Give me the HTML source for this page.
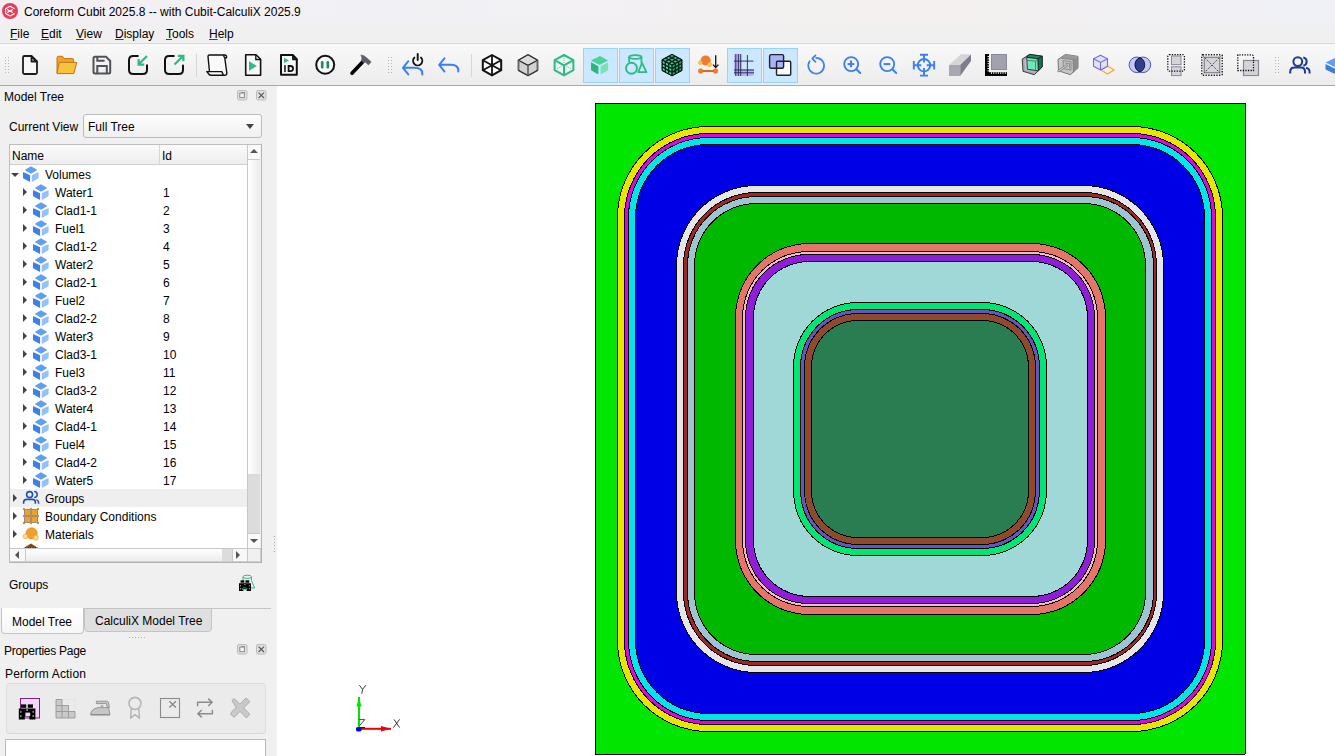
<!DOCTYPE html>
<html><head><meta charset="utf-8"><style>
*{margin:0;padding:0;box-sizing:border-box}
html,body{width:1335px;height:756px;overflow:hidden;background:#fff;font-family:"Liberation Sans", sans-serif;font-size:12px;color:#000}
.a{position:absolute}
.t{position:absolute;white-space:nowrap;line-height:14px;margin-top:1px}
.tri-r{position:absolute;width:0;height:0;border-left:4px solid #444;border-top:4px solid transparent;border-bottom:4px solid transparent}
.tri-d{position:absolute;width:0;height:0;border-top:4px solid #444;border-left:4px solid transparent;border-right:4px solid transparent}
u{text-decoration:underline;text-decoration-color:#444}
</style></head><body>
<div class="a" style="left:0;top:0;width:1335px;height:23px;background:linear-gradient(90deg,#f4eff3 0%,#f1f1f5 30%,#f4f0ef 70%,#eff1f7 100%)"></div>
<div class="t" style="left:24px;top:4px">Coreform Cubit 2025.8 -- with Cubit-CalculiX 2025.9</div>
<div class="a" style="left:0;top:23px;width:1335px;height:21px;background:#f0f0f0;border-bottom:1px solid #d8d8d8"></div>
<div class="t" style="left:10px;top:26px"><u>F</u>ile</div>
<div class="t" style="left:41px;top:26px"><u>E</u>dit</div>
<div class="t" style="left:76px;top:26px"><u>V</u>iew</div>
<div class="t" style="left:115px;top:26px"><u>D</u>isplay</div>
<div class="t" style="left:166px;top:26px"><u>T</u>ools</div>
<div class="t" style="left:209px;top:26px"><u>H</u>elp</div>
<div class="a" style="left:0;top:44px;width:1335px;height:42px;background:linear-gradient(#f9f9f9,#ececec);border-bottom:1px solid #a9a9a9"></div>
<svg class="a" style="left:0;top:0" width="1335" height="86">
<circle cx="10" cy="11" r="8" fill="#ea3c5a"/>
<path d="M14.6 8.7 L10 6.2 L5.6 8.7 V13.4 L10 15.9 L14.6 13.4 M7.2 9.4 L12.8 12.6 M7.2 12.6 L12.8 9.4" stroke="#fff" stroke-width="1.1" fill="none" stroke-linejoin="round"/>
<rect x="5" y="57" width="1" height="1" fill="#b4b4b4"/><rect x="8" y="57" width="1" height="1" fill="#b4b4b4"/><rect x="5" y="60" width="1" height="1" fill="#b4b4b4"/><rect x="8" y="60" width="1" height="1" fill="#b4b4b4"/><rect x="5" y="63" width="1" height="1" fill="#b4b4b4"/><rect x="8" y="63" width="1" height="1" fill="#b4b4b4"/><rect x="5" y="66" width="1" height="1" fill="#b4b4b4"/><rect x="8" y="66" width="1" height="1" fill="#b4b4b4"/><rect x="5" y="69" width="1" height="1" fill="#b4b4b4"/><rect x="8" y="69" width="1" height="1" fill="#b4b4b4"/><rect x="5" y="72" width="1" height="1" fill="#b4b4b4"/><rect x="8" y="72" width="1" height="1" fill="#b4b4b4"/><path d="M24.5 56 H31.5 L37 61.5 V72.5 Q37 74 35.5 74 H24.5 Q23 74 23 72.5 V57.5 Q23 56 24.5 56Z" fill="#f8f8f8" stroke="#1c1c1c" stroke-width="1.8" stroke-linejoin="round"/><path d="M31.5 56.5 V61.5 H36.5Z" fill="#fff" stroke="#1c1c1c" stroke-width="1.8" stroke-linejoin="round"/><path d="M57 73 V57.8 Q57 56.3 58.5 56.3 H62.5 L64.3 58.6 H72.2 Q73.7 58.6 73.7 60.1 V73Z" fill="#f0a22a" stroke="#c2761a" stroke-width="1"/><path d="M59.2 62.4 H76.8 L73.8 73.6 H57Z" fill="#f8c33a" stroke="#c2761a" stroke-width="1" stroke-linejoin="round"/><path d="M95 56.8 H106 L110.2 61 V72 Q110.2 73.5 108.7 73.5 H95 Q93.5 73.5 93.5 72 V58.3 Q93.5 56.8 95 56.8Z" fill="none" stroke="#50535b" stroke-width="2"/><path d="M97.3 57 V60.8 H104.6" fill="none" stroke="#50535b" stroke-width="2"/><path d="M97.3 73.5 V66 H106.8 V73.5" fill="none" stroke="#50535b" stroke-width="2"/><path d="M137.8 56 H133.2 Q129 56 129 60.2 V69.8 Q129 74 133.2 74 H142.8 Q147 74 147 69.8 V65.2" fill="none" stroke="#111" stroke-width="2" stroke-linecap="round"/><path d="M147 56 L139 64 M138.6 59 V64.6 H144.2" fill="none" stroke="#2dbb84" stroke-width="2.2"/><path d="M173.8 56 H169.2 Q165 56 165 60.2 V69.8 Q165 74 169.2 74 H178.8 Q183 74 183 69.8 V65.5" fill="none" stroke="#111" stroke-width="2" stroke-linecap="round"/><path d="M174.5 64.5 L182.8 56.2 M177.8 55.8 H183.4 V61.2" fill="none" stroke="#2dbb84" stroke-width="2.2"/><rect x="196" y="54" width="1" height="23" fill="#d6d6d6"/><path d="M209.5 71.8 L208 56.5 Q208 55 209.5 55 H224.5 Q227 55 226.5 57.8 H224.8 L226.8 73 Q227 75.3 224.6 75.3 H211.5 Q209.5 75.3 208.6 73.8 L206.8 71.6 H221.8 L223.2 74.6" fill="#fafafa" stroke="#111" stroke-width="1.4" stroke-linejoin="round"/><path d="M224.3 55.1 Q223 56 224.8 57.8" fill="none" stroke="#111" stroke-width="1.3"/><path d="M245.7 54.7 H256 L260.6 59.3 V75.3 H245.7Z" fill="#f8f8f8" stroke="#111" stroke-width="1.6" stroke-linejoin="round"/><path d="M255.8 55 V59.5 H260.3" fill="none" stroke="#111" stroke-width="1.3"/><path d="M249 61.2 L256.8 66 L249 70.8Z" fill="#2dbb84"/><path d="M281 55 H292.7 L296.8 59.1 V74.8 H281Z" fill="#f8f8f8" stroke="#111" stroke-width="2" stroke-linejoin="round"/><path d="M292.7 55 V59.6 H296.8Z" fill="#333" stroke="#111" stroke-width="1.2" stroke-linejoin="round"/><path d="M284 57.7 L289 60.4 L284 63.1Z" fill="#2dbb84"/><rect x="284.1" y="65.1" width="1.7" height="7" fill="#2a2a2a"/><path d="M288.6 66 H290.4 Q293.1 66 293.1 68.55 Q293.1 71.1 290.4 71.1 H288.6Z" fill="none" stroke="#111" stroke-width="1.8"/><circle cx="325.2" cy="64.8" r="9" fill="#fafafa" stroke="#111" stroke-width="2"/><rect x="320.9" y="61" width="2.6" height="7.5" rx="1.2" fill="#1e8a5c"/><rect x="326.5" y="61" width="2.6" height="7.5" rx="1.2" fill="#1e8a5c"/><path d="M352 73.2 L362.6 62" stroke="#000" stroke-width="3.6" stroke-linecap="round"/><path d="M360.9 55 L364 55.8 L367.2 58.3 L371.2 61.9 L368.4 64.9 L365.6 62.3 L363.7 62.7 L361.4 60.6 L362 57.9Z" fill="#5c5f6a" stroke="#5c5f6a" stroke-width="0.6" stroke-linejoin="round"/><rect x="388" y="57" width="1" height="1" fill="#b4b4b4"/><rect x="391" y="57" width="1" height="1" fill="#b4b4b4"/><rect x="388" y="60" width="1" height="1" fill="#b4b4b4"/><rect x="391" y="60" width="1" height="1" fill="#b4b4b4"/><rect x="388" y="63" width="1" height="1" fill="#b4b4b4"/><rect x="391" y="63" width="1" height="1" fill="#b4b4b4"/><rect x="388" y="66" width="1" height="1" fill="#b4b4b4"/><rect x="391" y="66" width="1" height="1" fill="#b4b4b4"/><rect x="388" y="69" width="1" height="1" fill="#b4b4b4"/><rect x="391" y="69" width="1" height="1" fill="#b4b4b4"/><rect x="388" y="72" width="1" height="1" fill="#b4b4b4"/><rect x="391" y="72" width="1" height="1" fill="#b4b4b4"/><path d="M408.3 61.2 L403 67.8 L408.3 74.4 M403.2 67.8 H414.5 Q422.3 67.8 422.3 73.6 V74.6" fill="none" stroke="#3b7ff0" stroke-width="2" stroke-linecap="round" stroke-linejoin="round"/><path d="M414.4 57.6 A4.6 4.6 0 1 0 421 57.6 M417.7 54 V60" fill="none" stroke="#111" stroke-width="1.9" stroke-linecap="round"/><path d="M444.4 58.4 L439.2 64.8 L444.4 71.4 M439.4 64.8 H451 Q458.3 64.8 458.3 70.5 V71.6" fill="none" stroke="#3b7ff0" stroke-width="2" stroke-linecap="round" stroke-linejoin="round"/><rect x="471" y="54" width="1" height="23" fill="#d6d6d6"/><polygon points="492,55 501.2,60.2 501.2,70.2 492,75.4 482.8,70.2 482.8,60.2" fill="#fafafa" stroke="#111" stroke-width="2" stroke-linejoin="round"/><path d="M492 55 V75.4 M482.8 60.2 L501.2 70.2 M501.2 60.2 L482.8 70.2" stroke="#111" stroke-width="1.8"/><polygon points="528,54.8 537.6,60.2 537.6,70.4 528,75.6 518.4,70.4 518.4,60.2" fill="#d2d2d6" stroke="#2a2a2a" stroke-width="1.2" stroke-linejoin="round"/><polygon points="528,54.8 537.6,60.2 528,65.4 518.4,60.2" fill="#dcdce0" stroke="#2a2a2a" stroke-width="1.2" stroke-linejoin="round"/><path d="M528 65.4 V75.2 M518.6 60.6 V70 M537.4 60.6 V70" stroke="#6a6a6a" stroke-width="1.8"/><polygon points="564,55 573.4,60.2 573.4,70.2 564,75.4 554.6,70.2 554.6,60.2" fill="none" stroke="#2dbb84" stroke-width="2" stroke-linejoin="round"/><path d="M554.6 60.2 L564 65.4 L573.4 60.2 M564 65.4 V75.4" fill="none" stroke="#2dbb84" stroke-width="2"/><path d="M564 56 V64 M557 68.5 L562 66 M571 68.5 L566 66" stroke="#2dbb84" stroke-width="0.8" stroke-dasharray="1 1"/><rect x="583.5" y="48.5" width="34" height="34" fill="#cce8ff" stroke="#99d1ff" stroke-width="1"/><rect x="619.5" y="48.5" width="34" height="34" fill="#cce8ff" stroke="#99d1ff" stroke-width="1"/><rect x="655.5" y="48.5" width="34" height="34" fill="#cce8ff" stroke="#99d1ff" stroke-width="1"/><rect x="727.5" y="48.5" width="34" height="34" fill="#cce8ff" stroke="#99d1ff" stroke-width="1"/><rect x="763.5" y="48.5" width="34" height="34" fill="#cce8ff" stroke="#99d1ff" stroke-width="1"/><path d="M599.5 56.2 Q600 56 600.5 56.3 L607.3 60 Q608 60.5 607.3 61 L600.5 64.6 Q599.5 65.1 598.5 64.6 L591.7 61 Q591 60.5 591.7 60 Z" fill="#4ad49c"/><path d="M591 62.2 L598.4 66.2 V73.6 Q598.4 74.3 597.6 73.9 L591.8 70.8 Q591 70.3 591 69.5Z" fill="#2cb57c"/><path d="M608.2 62.2 L600.6 66.2 V73.6 Q600.6 74.3 601.4 73.9 L607.4 70.8 Q608.2 70.3 608.2 69.5Z" fill="#78e3b6"/><ellipse cx="635.3" cy="57" rx="6.2" ry="1.9" fill="none" stroke="#2dbb84" stroke-width="1.8"/><path d="M629.1 57 V62.5 M641.5 57 V63.5" stroke="#2dbb84" stroke-width="1.8"/><path d="M642 63 L646.5 72.2 H638.3Z" fill="none" stroke="#2dbb84" stroke-width="1.8" stroke-linejoin="round"/><circle cx="631.5" cy="68.2" r="5.5" fill="#cce8ff" stroke="#2dbb84" stroke-width="1.9"/><polygon points="672,54.3 682,59.699999999999996 682,70.5 672,75.9 662,70.5 662,59.699999999999996" fill="#0b2419" stroke="#000" stroke-width="1" stroke-linejoin="round"/><polygon points="663.4666666666667,59.699999999999996 665.3333333333334,58.69199999999999 667.2,59.699999999999996 665.3333333333334,60.708" fill="#3fcf94"/><polygon points="666.8000000000001,61.49999999999999 668.6666666666667,60.49199999999999 670.5333333333334,61.49999999999999 668.6666666666667,62.507999999999996" fill="#3fcf94"/><polygon points="670.1333333333333,63.3 672.0,62.291999999999994 673.8666666666667,63.3 672.0,64.30799999999999" fill="#3fcf94"/><polygon points="666.8000000000001,57.9 668.6666666666667,56.891999999999996 670.5333333333334,57.9 668.6666666666667,58.908" fill="#3fcf94"/><polygon points="670.1333333333334,59.699999999999996 672.0000000000001,58.69199999999999 673.8666666666668,59.699999999999996 672.0000000000001,60.708" fill="#3fcf94"/><polygon points="673.4666666666667,61.5 675.3333333333334,60.492 677.2,61.5 675.3333333333334,62.508" fill="#3fcf94"/><polygon points="670.1333333333333,56.099999999999994 672.0,55.09199999999999 673.8666666666667,56.099999999999994 672.0,57.108" fill="#3fcf94"/><polygon points="673.4666666666667,57.89999999999999 675.3333333333334,56.89199999999999 677.2,57.89999999999999 675.3333333333334,58.907999999999994" fill="#3fcf94"/><polygon points="676.8,59.699999999999996 678.6666666666666,58.69199999999999 680.5333333333333,59.699999999999996 678.6666666666666,60.708" fill="#3fcf94"/><polygon points="662.7333333333333,60.888 664.6,61.896 664.6,63.912 662.7333333333333,62.903999999999996" fill="#52dca4"/><polygon points="662.7333333333333,64.488 664.6,65.496 664.6,67.512 662.7333333333333,66.504" fill="#52dca4"/><polygon points="662.7333333333333,68.088 664.6,69.09599999999999 664.6,71.112 662.7333333333333,70.104" fill="#52dca4"/><polygon points="666.0666666666667,62.687999999999995 667.9333333333334,63.696 667.9333333333334,65.712 666.0666666666667,64.704" fill="#52dca4"/><polygon points="666.0666666666667,66.288 667.9333333333334,67.29599999999999 667.9333333333334,69.312 666.0666666666667,68.304" fill="#52dca4"/><polygon points="666.0666666666667,69.88799999999999 667.9333333333334,70.89599999999999 667.9333333333334,72.91199999999999 666.0666666666667,71.904" fill="#52dca4"/><polygon points="669.4,64.488 671.2666666666667,65.496 671.2666666666667,67.512 669.4,66.504" fill="#52dca4"/><polygon points="669.4,68.088 671.2666666666667,69.09599999999999 671.2666666666667,71.112 669.4,70.104" fill="#52dca4"/><polygon points="669.4,71.688 671.2666666666667,72.696 671.2666666666667,74.712 669.4,73.70400000000001" fill="#52dca4"/><polygon points="672.7333333333333,65.496 674.6,64.488 674.6,66.504 672.7333333333333,67.512" fill="#2fae78"/><polygon points="672.7333333333333,69.09599999999999 674.6,68.088 674.6,70.104 672.7333333333333,71.112" fill="#2fae78"/><polygon points="672.7333333333333,72.696 674.6,71.688 674.6,73.70400000000001 672.7333333333333,74.712" fill="#2fae78"/><polygon points="676.0666666666667,63.696 677.9333333333334,62.687999999999995 677.9333333333334,64.704 676.0666666666667,65.712" fill="#2fae78"/><polygon points="676.0666666666667,67.29599999999999 677.9333333333334,66.288 677.9333333333334,68.304 676.0666666666667,69.312" fill="#2fae78"/><polygon points="676.0666666666667,70.896 677.9333333333334,69.888 677.9333333333334,71.90400000000001 676.0666666666667,72.912" fill="#2fae78"/><polygon points="679.4,61.895999999999994 681.2666666666667,60.88799999999999 681.2666666666667,62.90399999999999 679.4,63.91199999999999" fill="#2fae78"/><polygon points="679.4,65.496 681.2666666666667,64.488 681.2666666666667,66.504 679.4,67.512" fill="#2fae78"/><polygon points="679.4,69.09599999999999 681.2666666666667,68.088 681.2666666666667,70.104 679.4,71.112" fill="#2fae78"/><circle cx="705.6" cy="60.5" r="5.1" fill="#f27c2c"/><circle cx="700.4" cy="62.6" r="1.9" fill="#f9c63f" stroke="#e9a53a" stroke-width="0.6"/><circle cx="709.6" cy="64.6" r="2.1" fill="#f9c63f" stroke="#e9a53a" stroke-width="0.6"/><path d="M700.6 71 H715.6" stroke="#d86a22" stroke-width="2"/><circle cx="700.6" cy="71" r="2.3" fill="#f27c2c" stroke="#d86a22" stroke-width="0.6"/><circle cx="715.6" cy="71" r="2.3" fill="#f27c2c" stroke="#d86a22" stroke-width="0.6"/><path d="M715.7 55.2 V67.4 M713 64.6 L715.7 67.6 L718.4 64.6" fill="none" stroke="#111" stroke-width="1.3"/><path d="M736 54 H739.5 Q741.5 54 741.5 56 V69 H752 Q754 69 754 71 V74 Q754 76 752 76 H736 Q734 76 734 74 V56 Q734 54 736 54Z" fill="#b3b3f3"/><path d="M735.8 54 V76 M738.4 54 V76 M740.7 54 V76 M747.4 55 V76 M734 61.1 H753.4 M734 70 H754 M734 72.8 H754" stroke="#23234f" stroke-width="0.9"/><rect x="776.5" y="61.3" width="14.2" height="14" rx="1" fill="#fbfbff"/><rect x="769.6" y="54.6" width="14" height="13.6" rx="1.5" fill="#a9b4f8" stroke="#222" stroke-width="1.4"/><rect x="776.5" y="61.3" width="14.2" height="14" rx="1" fill="none" stroke="#222" stroke-width="1.4"/><path d="M816.2 57.8 A7.9 7.9 0 1 1 809.7 61.2" fill="none" stroke="#3b7ff0" stroke-width="1.7" stroke-linecap="round"/><path d="M815.5 55.4 L812.2 58.7 L815.5 61.9" fill="none" stroke="#3b7ff0" stroke-width="1.7" stroke-linecap="round" stroke-linejoin="round"/><circle cx="851.2" cy="64.1" r="7" fill="none" stroke="#3b7ff0" stroke-width="1.85"/><path d="M856.4000000000001 69.3 L860.2 73" stroke="#3b7ff0" stroke-width="2" stroke-linecap="round"/><path d="M847.6 64.1 H854.3000000000001" stroke="#3b7ff0" stroke-width="2"/><path d="M851.0 60.6 V67.3" stroke="#3b7ff0" stroke-width="2"/><circle cx="887.2" cy="64.1" r="7" fill="none" stroke="#3b7ff0" stroke-width="1.85"/><path d="M892.4000000000001 69.3 L896.2 73" stroke="#3b7ff0" stroke-width="2" stroke-linecap="round"/><path d="M883.6 64.1 H890.3000000000001" stroke="#3b7ff0" stroke-width="2"/><circle cx="924" cy="65.2" r="6.2" fill="none" stroke="#3b7ff0" stroke-width="1.9"/><path d="M924 55 V62.5 M924 68 V75.5 M913.8 65.2 H921.3 M926.7 65.2 H934.2 M920 54.8 H928 M920 75.6 H928 M913.8 61 V69.4 M934.2 61 V69.4" stroke="#3b7ff0" stroke-width="1.9"/><polygon points="949,65 960.2,65 971,54.5 961,54.3" fill="#d4d4da"/><polygon points="960.2,65 971,54.5 971,61 960.2,76" fill="#7d7d8b"/><rect x="949" y="65" width="11.2" height="11" fill="#a7a7b1"/><rect x="991.5" y="54.5" width="15" height="15" fill="#a2a2ae" stroke="#8a8a98" stroke-width="1"/><path d="M985 54 H989 V72.3 H1007 V76 H985Z" fill="#000"/><rect x="987.5" y="56.0" width="1.5" height="1" fill="#fff"/><rect x="991.0" y="72.3" width="1" height="1.5" fill="#fff"/><rect x="987.5" y="58.4" width="1.5" height="1" fill="#fff"/><rect x="993.3" y="72.3" width="1" height="1.5" fill="#fff"/><rect x="987.5" y="60.8" width="1.5" height="1" fill="#fff"/><rect x="995.6" y="72.3" width="1" height="1.5" fill="#fff"/><rect x="987.5" y="63.2" width="1.5" height="1" fill="#fff"/><rect x="997.9" y="72.3" width="1" height="1.5" fill="#fff"/><rect x="987.5" y="65.6" width="1.5" height="1" fill="#fff"/><rect x="1000.2" y="72.3" width="1" height="1.5" fill="#fff"/><rect x="987.5" y="68.0" width="1.5" height="1" fill="#fff"/><rect x="1002.5" y="72.3" width="1" height="1.5" fill="#fff"/><rect x="987.5" y="70.4" width="1.5" height="1" fill="#fff"/><rect x="1004.8" y="72.3" width="1" height="1.5" fill="#fff"/><polygon points="1022.2,59.1 1029.4,54.4 1042.2,56.2 1042.2,67 1034.3,74.7 1023,71.3" fill="#a9a9b6" stroke="#2a2a2a" stroke-width="0.9" stroke-linejoin="round"/><polygon points="1024.6,60.5 1026.9,58.5 1027.4,69.3 1034.5,72.6 1025.4,69.8" fill="#c4c4ce"/><polygon points="1029.4,54.4 1042.2,56.2 1037.8,58.7 1026.7,57.4" fill="#1e8a60" stroke="#1a1a1a" stroke-width="0.8" stroke-linejoin="round"/><polygon points="1042.2,56.2 1042.2,67 1038.3,70.8 1037.8,58.7" fill="#157452" stroke="#1a1a1a" stroke-width="0.8" stroke-linejoin="round"/><polygon points="1026.7,57.4 1037.8,58.7 1038.3,70.8 1027.4,69.3" fill="#72e8ba" stroke="#1a1a1a" stroke-width="0.8" stroke-linejoin="round"/><path d="M1027 60.2 L1035.6 61.2 L1037.8 58.8 M1035.6 61.2 V70.4" fill="none" stroke="#2a5a48" stroke-width="0.7"/><polygon points="1058,59.4 1065.5,54.4 1078,56.4 1078,67.8 1070.4,74.7 1058.5,70.8" fill="#c6c6c6" stroke="#6a6a6a" stroke-width="0.9" stroke-linejoin="round"/><polygon points="1065.5,54.4 1078,56.4 1073,59.6 1061,58.2" fill="#9a9a9a"/><polygon points="1078,56.4 1078,67.8 1073.4,72.4 1073,59.6" fill="#8e8e8e"/><path d="M1061 58.2 L1073 59.6 L1073.4 72.4 M1063 60.6 L1071 61.6 V70 L1063.4 68.6Z M1065 63 L1069.4 63.6 V68.2" fill="none" stroke="#7a7a7a" stroke-width="0.8"/><path d="M1058.6 71 L1066.6 65.6" stroke="#8a8a8a" stroke-width="2.6" stroke-linecap="round"/><path d="M1058.6 71 L1066.6 65.6" stroke="#d6d6d6" stroke-width="1" stroke-linecap="round"/><path d="M1101 70 L1107.5 66 L1114 70 L1107.5 74Z" fill="none" stroke="#f4a43a" stroke-width="1.2"/><polygon points="1100.5,55.2 1107.5,58.8 1107.5,66.2 1100.5,70 1093.5,66.2 1093.5,58.8" fill="#e2e2e8" stroke="#6b6bf6" stroke-width="1.05" stroke-linejoin="round"/><path d="M1093.5 58.8 L1100.5 62.5 L1107.5 58.8 M1100.5 62.5 V70" fill="none" stroke="#6b6bf6" stroke-width="1.05"/><circle cx="1136.9" cy="64.8" r="7.8" fill="#c3c8f6" stroke="#3a4aa4" stroke-width="0.9"/><circle cx="1142.9" cy="64.8" r="7.8" fill="#c3c8f6" stroke="#3a4aa4" stroke-width="0.9"/><path d="M1139.9 57.6 A7.8 7.8 0 0 1 1139.9 72 A7.8 7.8 0 0 1 1139.9 57.6Z" fill="#2f3f8e" stroke="#111" stroke-width="0.9"/><rect x="1171.5" y="56" width="9.5" height="8.6" fill="#d4d4da" stroke="#8a8a96" stroke-width="1"/><rect x="1171.5" y="66.8" width="9.5" height="8.8" fill="#d4d4da" stroke="#8a8a96" stroke-width="1"/><rect x="1167.8" y="54.6" width="16.6" height="16.6" rx="1.5" fill="none" stroke="#111" stroke-width="1.3" stroke-dasharray="1.3 1.3"/><rect x="1204.3" y="57.3" width="15.4" height="15.4" fill="#d4d4da" stroke="#8a8a96" stroke-width="1.4"/><path d="M1203.5 56.5 L1220.5 73.5 M1220.5 56.5 L1203.5 73.5" stroke="#333" stroke-width="1" stroke-dasharray="1.2 1.2"/><rect x="1201.8" y="54.8" width="20.4" height="20.4" rx="1" fill="none" stroke="#111" stroke-width="1.4" stroke-dasharray="1.3 1.4"/><rect x="1243.5" y="60.5" width="15" height="15" fill="#d4d4da" stroke="#8a8a96" stroke-width="1.2"/><path d="M1253.5 61 V57 Q1253.5 54.8 1251.3 54.8 H1237.8 V70.5 H1253.5 V61" fill="none" stroke="#111" stroke-width="1.3" stroke-dasharray="1.3 1.3"/><rect x="1275" y="57" width="1" height="1" fill="#b4b4b4"/><rect x="1278" y="57" width="1" height="1" fill="#b4b4b4"/><rect x="1275" y="60" width="1" height="1" fill="#b4b4b4"/><rect x="1278" y="60" width="1" height="1" fill="#b4b4b4"/><rect x="1275" y="63" width="1" height="1" fill="#b4b4b4"/><rect x="1278" y="63" width="1" height="1" fill="#b4b4b4"/><rect x="1275" y="66" width="1" height="1" fill="#b4b4b4"/><rect x="1278" y="66" width="1" height="1" fill="#b4b4b4"/><rect x="1275" y="69" width="1" height="1" fill="#b4b4b4"/><rect x="1278" y="69" width="1" height="1" fill="#b4b4b4"/><rect x="1275" y="72" width="1" height="1" fill="#b4b4b4"/><rect x="1278" y="72" width="1" height="1" fill="#b4b4b4"/><circle cx="1297.8" cy="61.6" r="4.4" fill="none" stroke="#1c3d8f" stroke-width="2"/><path d="M1290.2 73.5 V72 Q1290.2 67.6 1294.6 67.6 H1301 Q1305 67.6 1305 72 V73.5" fill="none" stroke="#1c3d8f" stroke-width="2"/><path d="M1303.3 57.4 A4.3 4.3 0 0 1 1303.3 65.8" fill="none" stroke="#1c3d8f" stroke-width="2"/><path d="M1306 67.8 Q1309.6 68.5 1309.6 72 V73.5" fill="none" stroke="#1c3d8f" stroke-width="2"/><path d="M1325.5 62.5 L1336 57.5 L1346 62.5 L1336 67.5Z" fill="#5d9ef6"/><path d="M1325.5 64 L1335 68.8 V74 L1325.5 69.5Z" fill="#3b7ce9"/></svg>
<div class="a" style="left:0;top:86px;width:277px;height:670px;background:#f0f0f0"></div>
<div class="t" style="left:4px;top:89px">Model Tree</div>
<div class="t" style="left:9px;top:119px">Current View</div>
<div class="a" style="left:83px;top:114px;width:179px;height:24px;border:1px solid #bcbcbc;border-radius:3px;background:linear-gradient(#fdfdfd,#f0f0f0)"></div>
<div class="t" style="left:88px;top:119px">Full Tree</div>
<div class="tri-d" style="left:246px;top:124px;border-width:5px 4.5px 0 4.5px;border-top-color:#444"></div>
<!-- tree frame -->
<div class="a" style="left:9px;top:144px;width:253px;height:419px;border:1px solid #bdbdbd;border-right-color:#b4b4b4;border-bottom-color:#b4b4b4;background:#fff;box-shadow:inset -1px -1px 0 #cfcfcf"></div>
<div class="a" style="left:10px;top:145px;width:237px;height:20px;background:linear-gradient(#fbfbfb,#ededed);border-bottom:1px solid #cfcfcf"></div>
<div class="a" style="left:159px;top:145px;width:1px;height:19px;background:#d6d6d6"></div>
<div class="t" style="left:12px;top:148px">Name</div>
<div class="t" style="left:162px;top:148px">Id</div>
<div class="a" style="left:10px;top:489px;width:237px;height:18px;background:#efefef"></div>
<div class="tri-d" style="left:11px;top:173px;border-width:4px 4px 0 4px"></div><div class="t" style="left:45px;top:167px">Volumes</div><div class="tri-r" style="left:23px;top:188px"></div><div class="t" style="left:55px;top:185px">Water1</div><div class="t" style="left:163px;top:185px">1</div><div class="tri-r" style="left:23px;top:206px"></div><div class="t" style="left:55px;top:203px">Clad1-1</div><div class="t" style="left:163px;top:203px">2</div><div class="tri-r" style="left:23px;top:224px"></div><div class="t" style="left:55px;top:221px">Fuel1</div><div class="t" style="left:163px;top:221px">3</div><div class="tri-r" style="left:23px;top:242px"></div><div class="t" style="left:55px;top:239px">Clad1-2</div><div class="t" style="left:163px;top:239px">4</div><div class="tri-r" style="left:23px;top:260px"></div><div class="t" style="left:55px;top:257px">Water2</div><div class="t" style="left:163px;top:257px">5</div><div class="tri-r" style="left:23px;top:278px"></div><div class="t" style="left:55px;top:275px">Clad2-1</div><div class="t" style="left:163px;top:275px">6</div><div class="tri-r" style="left:23px;top:296px"></div><div class="t" style="left:55px;top:293px">Fuel2</div><div class="t" style="left:163px;top:293px">7</div><div class="tri-r" style="left:23px;top:314px"></div><div class="t" style="left:55px;top:311px">Clad2-2</div><div class="t" style="left:163px;top:311px">8</div><div class="tri-r" style="left:23px;top:332px"></div><div class="t" style="left:55px;top:329px">Water3</div><div class="t" style="left:163px;top:329px">9</div><div class="tri-r" style="left:23px;top:350px"></div><div class="t" style="left:55px;top:347px">Clad3-1</div><div class="t" style="left:163px;top:347px">10</div><div class="tri-r" style="left:23px;top:368px"></div><div class="t" style="left:55px;top:365px">Fuel3</div><div class="t" style="left:163px;top:365px">11</div><div class="tri-r" style="left:23px;top:386px"></div><div class="t" style="left:55px;top:383px">Clad3-2</div><div class="t" style="left:163px;top:383px">12</div><div class="tri-r" style="left:23px;top:404px"></div><div class="t" style="left:55px;top:401px">Water4</div><div class="t" style="left:163px;top:401px">13</div><div class="tri-r" style="left:23px;top:422px"></div><div class="t" style="left:55px;top:419px">Clad4-1</div><div class="t" style="left:163px;top:419px">14</div><div class="tri-r" style="left:23px;top:440px"></div><div class="t" style="left:55px;top:437px">Fuel4</div><div class="t" style="left:163px;top:437px">15</div><div class="tri-r" style="left:23px;top:458px"></div><div class="t" style="left:55px;top:455px">Clad4-2</div><div class="t" style="left:163px;top:455px">16</div><div class="tri-r" style="left:23px;top:476px"></div><div class="t" style="left:55px;top:473px">Water5</div><div class="t" style="left:163px;top:473px">17</div>
<div class="tri-r" style="left:13px;top:494px"></div>
<div class="t" style="left:45px;top:491px">Groups</div>
<div class="tri-r" style="left:13px;top:512px"></div>
<div class="t" style="left:45px;top:509px">Boundary Conditions</div>
<div class="tri-r" style="left:13px;top:530px"></div>
<div class="t" style="left:45px;top:527px">Materials</div>
<!-- vertical scrollbar -->
<div class="a" style="left:247px;top:145px;width:14px;height:404px;background:#f2f2f2;border-left:1px solid #c8c8c8"></div>
<div class="a" style="left:248px;top:145px;width:12px;height:14px;background:#fafafa"></div>
<div class="a" style="left:248px;top:159px;width:12px;height:1px;background:#c8c8c8"></div>
<div class="a" style="left:248px;top:160px;width:12px;height:314px;background:linear-gradient(90deg,#ffffff,#ececec)"></div>
<div class="a" style="left:248px;top:474px;width:12px;height:59px;background:#dcdcdc"></div>
<div class="a" style="left:248px;top:533px;width:12px;height:1px;background:#c8c8c8"></div>
<div class="a" style="left:248px;top:534px;width:12px;height:14px;background:#fafafa"></div>
<div class="a" style="left:250px;top:149px;width:0;height:0;border-bottom:4px solid #555;border-left:4px solid transparent;border-right:4px solid transparent"></div>
<div class="tri-d" style="left:250px;top:539px;border-top-color:#555"></div>
<!-- horizontal scrollbar -->
<div class="a" style="left:10px;top:548px;width:251px;height:1px;background:#c8c8c8"></div>
<div class="a" style="left:10px;top:549px;width:15px;height:12px;background:#f8f8f8"></div>
<div class="a" style="left:25px;top:549px;width:1px;height:12px;background:#c8c8c8"></div>
<div class="a" style="left:26px;top:549px;width:196px;height:12px;background:linear-gradient(#ffffff,#ededed)"></div>
<div class="a" style="left:222px;top:549px;width:10px;height:12px;background:#dcdcdc"></div>
<div class="a" style="left:232px;top:549px;width:1px;height:12px;background:#c8c8c8"></div>
<div class="a" style="left:233px;top:549px;width:14px;height:12px;background:#f8f8f8"></div>
<div class="a" style="left:247px;top:549px;width:1px;height:12px;background:#c8c8c8"></div>
<div class="a" style="left:248px;top:549px;width:12px;height:12px;background:#f0f0f0"></div>
<div class="a" style="left:15px;top:551px;width:0;height:0;border-right:4px solid #555;border-top:4px solid transparent;border-bottom:4px solid transparent"></div>
<div class="tri-r" style="left:236px;top:551px;border-left-color:#555"></div>
<div class="t" style="left:9px;top:577px">Groups</div>
<!-- tabs -->
<div class="a" style="left:83px;top:608px;width:188px;height:1px;background:#c4c4c4"></div>
<div class="a" style="left:1px;top:608px;width:83px;height:26px;background:linear-gradient(#ffffff,#f6f6f6);border:1px solid #c4c4c4;border-top:none;border-radius:0 0 4px 4px"></div>
<div class="t" style="left:12px;top:614px">Model Tree</div>
<div class="a" style="left:84px;top:608px;width:128px;height:24px;background:#dfdfdf;border:1px solid #c4c4c4;border-radius:0 0 4px 4px"></div>
<div class="t" style="left:95px;top:613px">CalculiX Model Tree</div>
<div class="a" style="left:129px;top:637px;width:16px;height:1px;background:repeating-linear-gradient(90deg,#b0b0b0 0 1px,transparent 1px 3px)"></div>
<div class="a" style="left:274px;top:536px;width:1px;height:16px;background:repeating-linear-gradient(#b0b0b0 0 1px,transparent 1px 3px)"></div>
<div class="t" style="left:4px;top:643px;letter-spacing:-0.27px">Properties Page</div>
<div class="t" style="left:5px;top:666px;letter-spacing:0.17px">Perform Action</div>
<div class="a" style="left:6px;top:683px;width:260px;height:51px;border:1px solid #dcdcdc;border-radius:3px;background:#ebebeb"></div>
<div class="a" style="left:5px;top:739px;width:261px;height:20px;border:1px solid #b8b8b8;background:#fff"></div>
<svg class="a" style="left:0;top:0" width="277" height="756"><rect x="237.5" y="90.5" width="9.5" height="9.5" rx="1.5" fill="#e0e0e0" stroke="#bcbcbc" stroke-width="1"/><rect x="239.8" y="93" width="4.6" height="4.6" fill="#f4f4f4" stroke="#8c8c8c" stroke-width="1"/><rect x="241" y="92.2" width="4" height="1" fill="#8c8c8c"/><rect x="256.5" y="90.5" width="9.5" height="9.5" rx="1.5" fill="#e0e0e0" stroke="#bcbcbc" stroke-width="1"/><path d="M258.6 92.6 L264 98 M264 92.6 L258.6 98" stroke="#555" stroke-width="1.1"/><rect x="237.5" y="644.5" width="9.5" height="9.5" rx="1.5" fill="#e0e0e0" stroke="#bcbcbc" stroke-width="1"/><rect x="239.8" y="647" width="4.6" height="4.6" fill="#f4f4f4" stroke="#8c8c8c" stroke-width="1"/><rect x="241" y="646.2" width="4" height="1" fill="#8c8c8c"/><rect x="256.5" y="644.5" width="9.5" height="9.5" rx="1.5" fill="#e0e0e0" stroke="#bcbcbc" stroke-width="1"/><path d="M258.6 646.6 L264 652 M264 646.6 L258.6 652" stroke="#555" stroke-width="1.1"/><g transform="translate(23,166)"><path d="M7.6 0.4 Q8 0.1 8.4 0.4 L13.6 3.6 Q14.2 4 13.6 4.4 L8.4 7.5 Q8 7.8 7.6 7.5 L2.4 4.4 Q1.8 4 2.4 3.6Z" fill="#5f9ef5"/><path d="M0 6.6 Q0 6 0.6 6.3 L7.1 9.3 V15.4 Q7.1 16 6.5 15.7 L0.6 12.6 Q0 12.3 0 11.7Z" fill="#3f7fea"/><path d="M15.6 6.6 Q15.6 6 15 6.3 L8.8 9.3 V15.4 Q8.8 16 9.4 15.7 L15 12.6 Q15.6 12.3 15.6 11.7Z" fill="#93c2fa"/></g><g transform="translate(33,184)"><path d="M7.6 0.4 Q8 0.1 8.4 0.4 L13.6 3.6 Q14.2 4 13.6 4.4 L8.4 7.5 Q8 7.8 7.6 7.5 L2.4 4.4 Q1.8 4 2.4 3.6Z" fill="#5f9ef5"/><path d="M0 6.6 Q0 6 0.6 6.3 L7.1 9.3 V15.4 Q7.1 16 6.5 15.7 L0.6 12.6 Q0 12.3 0 11.7Z" fill="#3f7fea"/><path d="M15.6 6.6 Q15.6 6 15 6.3 L8.8 9.3 V15.4 Q8.8 16 9.4 15.7 L15 12.6 Q15.6 12.3 15.6 11.7Z" fill="#93c2fa"/></g><g transform="translate(33,202)"><path d="M7.6 0.4 Q8 0.1 8.4 0.4 L13.6 3.6 Q14.2 4 13.6 4.4 L8.4 7.5 Q8 7.8 7.6 7.5 L2.4 4.4 Q1.8 4 2.4 3.6Z" fill="#5f9ef5"/><path d="M0 6.6 Q0 6 0.6 6.3 L7.1 9.3 V15.4 Q7.1 16 6.5 15.7 L0.6 12.6 Q0 12.3 0 11.7Z" fill="#3f7fea"/><path d="M15.6 6.6 Q15.6 6 15 6.3 L8.8 9.3 V15.4 Q8.8 16 9.4 15.7 L15 12.6 Q15.6 12.3 15.6 11.7Z" fill="#93c2fa"/></g><g transform="translate(33,220)"><path d="M7.6 0.4 Q8 0.1 8.4 0.4 L13.6 3.6 Q14.2 4 13.6 4.4 L8.4 7.5 Q8 7.8 7.6 7.5 L2.4 4.4 Q1.8 4 2.4 3.6Z" fill="#5f9ef5"/><path d="M0 6.6 Q0 6 0.6 6.3 L7.1 9.3 V15.4 Q7.1 16 6.5 15.7 L0.6 12.6 Q0 12.3 0 11.7Z" fill="#3f7fea"/><path d="M15.6 6.6 Q15.6 6 15 6.3 L8.8 9.3 V15.4 Q8.8 16 9.4 15.7 L15 12.6 Q15.6 12.3 15.6 11.7Z" fill="#93c2fa"/></g><g transform="translate(33,238)"><path d="M7.6 0.4 Q8 0.1 8.4 0.4 L13.6 3.6 Q14.2 4 13.6 4.4 L8.4 7.5 Q8 7.8 7.6 7.5 L2.4 4.4 Q1.8 4 2.4 3.6Z" fill="#5f9ef5"/><path d="M0 6.6 Q0 6 0.6 6.3 L7.1 9.3 V15.4 Q7.1 16 6.5 15.7 L0.6 12.6 Q0 12.3 0 11.7Z" fill="#3f7fea"/><path d="M15.6 6.6 Q15.6 6 15 6.3 L8.8 9.3 V15.4 Q8.8 16 9.4 15.7 L15 12.6 Q15.6 12.3 15.6 11.7Z" fill="#93c2fa"/></g><g transform="translate(33,256)"><path d="M7.6 0.4 Q8 0.1 8.4 0.4 L13.6 3.6 Q14.2 4 13.6 4.4 L8.4 7.5 Q8 7.8 7.6 7.5 L2.4 4.4 Q1.8 4 2.4 3.6Z" fill="#5f9ef5"/><path d="M0 6.6 Q0 6 0.6 6.3 L7.1 9.3 V15.4 Q7.1 16 6.5 15.7 L0.6 12.6 Q0 12.3 0 11.7Z" fill="#3f7fea"/><path d="M15.6 6.6 Q15.6 6 15 6.3 L8.8 9.3 V15.4 Q8.8 16 9.4 15.7 L15 12.6 Q15.6 12.3 15.6 11.7Z" fill="#93c2fa"/></g><g transform="translate(33,274)"><path d="M7.6 0.4 Q8 0.1 8.4 0.4 L13.6 3.6 Q14.2 4 13.6 4.4 L8.4 7.5 Q8 7.8 7.6 7.5 L2.4 4.4 Q1.8 4 2.4 3.6Z" fill="#5f9ef5"/><path d="M0 6.6 Q0 6 0.6 6.3 L7.1 9.3 V15.4 Q7.1 16 6.5 15.7 L0.6 12.6 Q0 12.3 0 11.7Z" fill="#3f7fea"/><path d="M15.6 6.6 Q15.6 6 15 6.3 L8.8 9.3 V15.4 Q8.8 16 9.4 15.7 L15 12.6 Q15.6 12.3 15.6 11.7Z" fill="#93c2fa"/></g><g transform="translate(33,292)"><path d="M7.6 0.4 Q8 0.1 8.4 0.4 L13.6 3.6 Q14.2 4 13.6 4.4 L8.4 7.5 Q8 7.8 7.6 7.5 L2.4 4.4 Q1.8 4 2.4 3.6Z" fill="#5f9ef5"/><path d="M0 6.6 Q0 6 0.6 6.3 L7.1 9.3 V15.4 Q7.1 16 6.5 15.7 L0.6 12.6 Q0 12.3 0 11.7Z" fill="#3f7fea"/><path d="M15.6 6.6 Q15.6 6 15 6.3 L8.8 9.3 V15.4 Q8.8 16 9.4 15.7 L15 12.6 Q15.6 12.3 15.6 11.7Z" fill="#93c2fa"/></g><g transform="translate(33,310)"><path d="M7.6 0.4 Q8 0.1 8.4 0.4 L13.6 3.6 Q14.2 4 13.6 4.4 L8.4 7.5 Q8 7.8 7.6 7.5 L2.4 4.4 Q1.8 4 2.4 3.6Z" fill="#5f9ef5"/><path d="M0 6.6 Q0 6 0.6 6.3 L7.1 9.3 V15.4 Q7.1 16 6.5 15.7 L0.6 12.6 Q0 12.3 0 11.7Z" fill="#3f7fea"/><path d="M15.6 6.6 Q15.6 6 15 6.3 L8.8 9.3 V15.4 Q8.8 16 9.4 15.7 L15 12.6 Q15.6 12.3 15.6 11.7Z" fill="#93c2fa"/></g><g transform="translate(33,328)"><path d="M7.6 0.4 Q8 0.1 8.4 0.4 L13.6 3.6 Q14.2 4 13.6 4.4 L8.4 7.5 Q8 7.8 7.6 7.5 L2.4 4.4 Q1.8 4 2.4 3.6Z" fill="#5f9ef5"/><path d="M0 6.6 Q0 6 0.6 6.3 L7.1 9.3 V15.4 Q7.1 16 6.5 15.7 L0.6 12.6 Q0 12.3 0 11.7Z" fill="#3f7fea"/><path d="M15.6 6.6 Q15.6 6 15 6.3 L8.8 9.3 V15.4 Q8.8 16 9.4 15.7 L15 12.6 Q15.6 12.3 15.6 11.7Z" fill="#93c2fa"/></g><g transform="translate(33,346)"><path d="M7.6 0.4 Q8 0.1 8.4 0.4 L13.6 3.6 Q14.2 4 13.6 4.4 L8.4 7.5 Q8 7.8 7.6 7.5 L2.4 4.4 Q1.8 4 2.4 3.6Z" fill="#5f9ef5"/><path d="M0 6.6 Q0 6 0.6 6.3 L7.1 9.3 V15.4 Q7.1 16 6.5 15.7 L0.6 12.6 Q0 12.3 0 11.7Z" fill="#3f7fea"/><path d="M15.6 6.6 Q15.6 6 15 6.3 L8.8 9.3 V15.4 Q8.8 16 9.4 15.7 L15 12.6 Q15.6 12.3 15.6 11.7Z" fill="#93c2fa"/></g><g transform="translate(33,364)"><path d="M7.6 0.4 Q8 0.1 8.4 0.4 L13.6 3.6 Q14.2 4 13.6 4.4 L8.4 7.5 Q8 7.8 7.6 7.5 L2.4 4.4 Q1.8 4 2.4 3.6Z" fill="#5f9ef5"/><path d="M0 6.6 Q0 6 0.6 6.3 L7.1 9.3 V15.4 Q7.1 16 6.5 15.7 L0.6 12.6 Q0 12.3 0 11.7Z" fill="#3f7fea"/><path d="M15.6 6.6 Q15.6 6 15 6.3 L8.8 9.3 V15.4 Q8.8 16 9.4 15.7 L15 12.6 Q15.6 12.3 15.6 11.7Z" fill="#93c2fa"/></g><g transform="translate(33,382)"><path d="M7.6 0.4 Q8 0.1 8.4 0.4 L13.6 3.6 Q14.2 4 13.6 4.4 L8.4 7.5 Q8 7.8 7.6 7.5 L2.4 4.4 Q1.8 4 2.4 3.6Z" fill="#5f9ef5"/><path d="M0 6.6 Q0 6 0.6 6.3 L7.1 9.3 V15.4 Q7.1 16 6.5 15.7 L0.6 12.6 Q0 12.3 0 11.7Z" fill="#3f7fea"/><path d="M15.6 6.6 Q15.6 6 15 6.3 L8.8 9.3 V15.4 Q8.8 16 9.4 15.7 L15 12.6 Q15.6 12.3 15.6 11.7Z" fill="#93c2fa"/></g><g transform="translate(33,400)"><path d="M7.6 0.4 Q8 0.1 8.4 0.4 L13.6 3.6 Q14.2 4 13.6 4.4 L8.4 7.5 Q8 7.8 7.6 7.5 L2.4 4.4 Q1.8 4 2.4 3.6Z" fill="#5f9ef5"/><path d="M0 6.6 Q0 6 0.6 6.3 L7.1 9.3 V15.4 Q7.1 16 6.5 15.7 L0.6 12.6 Q0 12.3 0 11.7Z" fill="#3f7fea"/><path d="M15.6 6.6 Q15.6 6 15 6.3 L8.8 9.3 V15.4 Q8.8 16 9.4 15.7 L15 12.6 Q15.6 12.3 15.6 11.7Z" fill="#93c2fa"/></g><g transform="translate(33,418)"><path d="M7.6 0.4 Q8 0.1 8.4 0.4 L13.6 3.6 Q14.2 4 13.6 4.4 L8.4 7.5 Q8 7.8 7.6 7.5 L2.4 4.4 Q1.8 4 2.4 3.6Z" fill="#5f9ef5"/><path d="M0 6.6 Q0 6 0.6 6.3 L7.1 9.3 V15.4 Q7.1 16 6.5 15.7 L0.6 12.6 Q0 12.3 0 11.7Z" fill="#3f7fea"/><path d="M15.6 6.6 Q15.6 6 15 6.3 L8.8 9.3 V15.4 Q8.8 16 9.4 15.7 L15 12.6 Q15.6 12.3 15.6 11.7Z" fill="#93c2fa"/></g><g transform="translate(33,436)"><path d="M7.6 0.4 Q8 0.1 8.4 0.4 L13.6 3.6 Q14.2 4 13.6 4.4 L8.4 7.5 Q8 7.8 7.6 7.5 L2.4 4.4 Q1.8 4 2.4 3.6Z" fill="#5f9ef5"/><path d="M0 6.6 Q0 6 0.6 6.3 L7.1 9.3 V15.4 Q7.1 16 6.5 15.7 L0.6 12.6 Q0 12.3 0 11.7Z" fill="#3f7fea"/><path d="M15.6 6.6 Q15.6 6 15 6.3 L8.8 9.3 V15.4 Q8.8 16 9.4 15.7 L15 12.6 Q15.6 12.3 15.6 11.7Z" fill="#93c2fa"/></g><g transform="translate(33,454)"><path d="M7.6 0.4 Q8 0.1 8.4 0.4 L13.6 3.6 Q14.2 4 13.6 4.4 L8.4 7.5 Q8 7.8 7.6 7.5 L2.4 4.4 Q1.8 4 2.4 3.6Z" fill="#5f9ef5"/><path d="M0 6.6 Q0 6 0.6 6.3 L7.1 9.3 V15.4 Q7.1 16 6.5 15.7 L0.6 12.6 Q0 12.3 0 11.7Z" fill="#3f7fea"/><path d="M15.6 6.6 Q15.6 6 15 6.3 L8.8 9.3 V15.4 Q8.8 16 9.4 15.7 L15 12.6 Q15.6 12.3 15.6 11.7Z" fill="#93c2fa"/></g><g transform="translate(33,472)"><path d="M7.6 0.4 Q8 0.1 8.4 0.4 L13.6 3.6 Q14.2 4 13.6 4.4 L8.4 7.5 Q8 7.8 7.6 7.5 L2.4 4.4 Q1.8 4 2.4 3.6Z" fill="#5f9ef5"/><path d="M0 6.6 Q0 6 0.6 6.3 L7.1 9.3 V15.4 Q7.1 16 6.5 15.7 L0.6 12.6 Q0 12.3 0 11.7Z" fill="#3f7fea"/><path d="M15.6 6.6 Q15.6 6 15 6.3 L8.8 9.3 V15.4 Q8.8 16 9.4 15.7 L15 12.6 Q15.6 12.3 15.6 11.7Z" fill="#93c2fa"/></g><circle cx="29.6" cy="494.6" r="3" fill="none" stroke="#2150ae" stroke-width="1.6"/><path d="M23.6 503.8 V502.6 Q23.6 499.4 26.8 499.4 H32.4 Q35.4 499.4 35.4 502.6 V503.8" fill="none" stroke="#2150ae" stroke-width="1.6"/><path d="M34.2 491.6 A3 3 0 0 1 34.2 497.6" fill="none" stroke="#2150ae" stroke-width="1.5"/><path d="M36.4 499.6 Q38.6 500.4 38.6 502.6 V503.8" fill="none" stroke="#2150ae" stroke-width="1.5"/><rect x="24" y="509" width="14" height="14" fill="#8c8c8c"/><rect x="25" y="510" width="5.2" height="5.2" fill="#f3a122"/><rect x="31.8" y="510" width="5.2" height="5.2" fill="#f3a122"/><rect x="25" y="516.8" width="5.2" height="5.2" fill="#f3a122"/><rect x="31.8" y="516.8" width="5.2" height="5.2" fill="#f3a122"/><circle cx="24" cy="509" r="1.2" fill="#cf8a4a"/><circle cx="31" cy="509" r="1.2" fill="#cf8a4a"/><circle cx="38" cy="509" r="1.2" fill="#cf8a4a"/><circle cx="24" cy="516" r="1.2" fill="#cf8a4a"/><circle cx="38" cy="516" r="1.2" fill="#cf8a4a"/><circle cx="24" cy="523" r="1.2" fill="#cf8a4a"/><circle cx="31" cy="523" r="1.2" fill="#cf8a4a"/><circle cx="38" cy="523" r="1.2" fill="#cf8a4a"/><circle cx="31" cy="516" r="1.2" fill="#cf8a4a"/><circle cx="31.6" cy="533.4" r="5.6" fill="#f2a126" stroke="#cf7f22" stroke-width="0.7"/><circle cx="25.4" cy="536.4" r="2.3" fill="#f8de8a" stroke="#e0a848" stroke-width="0.7"/><circle cx="35.9" cy="537.8" r="2.5" fill="#f8de8a" stroke="#e0a848" stroke-width="0.7"/><defs><pattern id="chk" width="2.4" height="2.4" patternUnits="userSpaceOnUse" x="24" y="543"><rect width="2.4" height="2.4" fill="#f07a20"/><rect width="1.2" height="1.2" fill="#111"/><rect x="1.2" y="1.2" width="1.2" height="1.2" fill="#111"/></pattern></defs><path d="M23.6 548 L31 543.6 L38.2 548Z" fill="url(#chk)"/><ellipse cx="247.2" cy="576.8" rx="4.2" ry="1.6" fill="none" stroke="#2dbb84" stroke-width="1"/><path d="M243 577 V582 M251.4 577 V580.5 L254.6 588 H247" fill="none" stroke="#2dbb84" stroke-width="1"/><g transform="translate(239,580.3) scale(0.72)"><rect x="2.2" y="0" width="5.2" height="3.4" fill="#000"/><rect x="9" y="0" width="5.2" height="3.4" fill="#000"/><path d="M0 4 H16.6 V15 H10.6 V12.2 H6 V15 H0Z" fill="#000"/><rect x="6.4" y="4.6" width="3.8" height="3.6" fill="#000"/><rect x="1.6" y="6.4" width="1" height="2" fill="#ccc"/><rect x="1.6" y="10.6" width="1" height="2" fill="#ccc"/><rect x="13.8" y="6.4" width="1" height="2" fill="#ccc"/><rect x="13.8" y="10.6" width="1" height="2" fill="#ccc"/><rect x="7.6" y="5" width="1.4" height="1.4" fill="#ddd"/></g><ellipse cx="244.5" cy="588.8" rx="2.6" ry="1" fill="none" stroke="#2dbb84" stroke-width="0.9"/><rect x="20.5" y="698.5" width="19" height="19.5" fill="#f1d5fa" stroke="#7b237b" stroke-width="1"/><g transform="translate(18.8,704.4) scale(1.0)"><rect x="2.2" y="0" width="5.2" height="3.4" fill="#000"/><rect x="9" y="0" width="5.2" height="3.4" fill="#000"/><path d="M0 4 H16.6 V15 H10.6 V12.2 H6 V15 H0Z" fill="#000"/><rect x="6.4" y="4.6" width="3.8" height="3.6" fill="#000"/><rect x="1.6" y="6.4" width="1" height="2" fill="#ccc"/><rect x="1.6" y="10.6" width="1" height="2" fill="#ccc"/><rect x="13.8" y="6.4" width="1" height="2" fill="#ccc"/><rect x="13.8" y="10.6" width="1" height="2" fill="#ccc"/><rect x="7.6" y="5" width="1.4" height="1.4" fill="#ddd"/></g><rect x="25.4" y="712.6" width="4.8" height="3.4" fill="#f1d5fa"/><path d="M56 699.5 H62 V705.5 H68.5 V711.5 H75 V718 H56Z" fill="#c9c9c9"/><path d="M62 699.5 H75 M62 705.5 H75 M68.5 699.5 V711.5 M75 699.5 V711.5" stroke="#e2e2e2" stroke-width="0.8"/><path d="M56 699.5 H62 V705.5 H68.5 V711.5 H75 V718 H56Z M56 705.5 H62 M56 711.5 H68.5 M62 705.5 V718 M68.5 711.5 V718" fill="none" stroke="#979797" stroke-width="0.9"/><path d="M90.6 714.6 Q91 709 98 707.6 H108.6 L110 714.6Z" fill="#c6c6c6" stroke="#8f8f8f" stroke-width="0.9"/><path d="M96.4 701.2 H106.6 Q108.4 701.2 108.6 703 L109.4 707.6 H107.2 L106.4 703.6 H96.4Z" fill="#c6c6c6" stroke="#8f8f8f" stroke-width="0.9"/><rect x="100.6" y="705.2" width="2.8" height="2.4" fill="#aaa"/><path d="M90.8 714.8 H110" stroke="#909090" stroke-width="1.4"/><circle cx="135" cy="703.4" r="6" fill="none" stroke="#b6b6b6" stroke-width="1.6"/><path d="M131.2 708.6 L130.6 718.2 L135 714.6 L139.4 718.2 L138.8 708.6" fill="none" stroke="#b6b6b6" stroke-width="1.5" stroke-linejoin="round"/><rect x="160.5" y="698.5" width="19" height="19" fill="none" stroke="#8c8c8c" stroke-width="1.1"/><path d="M169.4 701.2 L176 707.6 M176 701.2 L169.4 707.6" stroke="#8c8c8c" stroke-width="1.4"/><path d="M197.6 706.2 V702.3 H212.4 M208.2 698.6 L212.2 702.3 L208.2 706" fill="none" stroke="#8c8c8c" stroke-width="1.5" stroke-linejoin="round"/><path d="M212.4 709.8 V713.7 H197.6 M201.8 710 L197.8 713.7 L201.8 717.4" fill="none" stroke="#8c8c8c" stroke-width="1.5" stroke-linejoin="round"/><path d="M232 700.4 L234 698.6 L240 704.2 L246 698 L250 701.6 L243.6 707.8 L249.8 714.2 L246.4 718 L240 711.4 L234.2 717.4 L230.6 714.2 Q231.4 711 236.2 707.8Z" fill="#c9c9c9" stroke="#a6a6a6" stroke-width="0.9" stroke-linejoin="round"/></svg>
<div class="a" style="left:277px;top:86px;width:1058px;height:670px;overflow:hidden"><svg width="1058" height="670" style="position:absolute;left:0;top:0" shape-rendering="crispEdges"><rect x="318" y="17" width="651" height="652" rx="0.5" fill="#000"/><rect x="319" y="18" width="649" height="650" rx="0" fill="rgb(0, 230, 0)"/><rect x="340" y="40" width="606" height="606" rx="91.25" fill="#000"/><rect x="341" y="41" width="604" height="604" rx="90.25" fill="rgb(230, 230, 0)"/><rect x="347" y="47" width="592" height="592" rx="84.25" fill="#000"/><rect x="348" y="48" width="590" height="590" rx="83.25" fill="rgb(230, 0, 230)"/><rect x="351" y="51" width="584" height="584" rx="80.25" fill="#000"/><rect x="352" y="52" width="582" height="582" rx="79.25" fill="rgb(0, 230, 230)"/><rect x="358" y="58" width="570" height="570" rx="73.25" fill="#000"/><rect x="359" y="59" width="568" height="568" rx="72.25" fill="rgb(0, 0, 230)"/><rect x="399" y="99" width="488" height="488" rx="80.5" fill="#000"/><rect x="400" y="100" width="486" height="486" rx="79.5" fill="rgb(230, 230, 230)"/><rect x="406" y="106" width="474" height="474" rx="73.5" fill="#000"/><rect x="407" y="107" width="472" height="472" rx="72.5" fill="rgb(158, 40, 40)"/><rect x="410" y="110" width="467" height="466" rx="69.5" fill="#000"/><rect x="411" y="111" width="465" height="464" rx="68.5" fill="rgb(158, 196, 210)"/><rect x="417" y="117" width="452" height="452" rx="62.5" fill="#000"/><rect x="418" y="118" width="450" height="450" rx="61.5" fill="rgb(0, 184, 0)"/><rect x="458" y="157" width="371" height="372" rx="74.5" fill="#000"/><rect x="459" y="158" width="369" height="370" rx="73.5" fill="rgb(229, 117, 104)"/><rect x="465" y="165" width="356" height="356" rx="66.5" fill="#000"/><rect x="466" y="166" width="354" height="354" rx="65.5" fill="rgb(248, 185, 194)"/><rect x="468" y="168" width="350" height="350" rx="63.5" fill="#000"/><rect x="469" y="169" width="348" height="348" rx="62.5" fill="rgb(144, 29, 218)"/><rect x="476" y="175" width="335" height="336" rx="56.5" fill="#000"/><rect x="477" y="176" width="333" height="334" rx="55.5" fill="rgb(160, 215, 215)"/><rect x="516" y="216" width="254" height="254" rx="64.75" fill="#000"/><rect x="517" y="217" width="252" height="252" rx="63.75" fill="rgb(0, 230, 115)"/><rect x="523" y="223" width="240" height="240" rx="57.75" fill="#000"/><rect x="524" y="224" width="238" height="238" rx="56.75" fill="rgb(100, 85, 195)"/><rect x="527" y="227" width="232" height="232" rx="53.75" fill="#000"/><rect x="528" y="228" width="230" height="230" rx="52.75" fill="rgb(142, 74, 42)"/><rect x="534" y="234" width="218" height="218" rx="46.75" fill="#000"/><rect x="535" y="235" width="216" height="216" rx="45.75" fill="rgb(42, 125, 80)"/><rect x="968" y="668" width="1" height="1" fill="#fff"/></svg><svg width="1058" height="670" style="position:absolute;left:0;top:0"><g transform="translate(-277,-86)"><path d="M359 697 V727" stroke="#00e600" stroke-width="2"/><path d="M359 697.5 L361.6 706.6 H356.4Z" fill="#00e600"/><path d="M360 728.8 H391" stroke="#f00000" stroke-width="2"/><path d="M391 728.8 L381 726 V731.6Z" fill="#f00000"/><path d="M359 727.6 H365" stroke="#111" stroke-width="1"/><rect x="356" y="727" width="5.6" height="4.4" rx="1.6" fill="#0000f0"/><path d="M359.4 685.2 L362.6 689.4 L365.8 685.2 M362.6 689.4 L361.8 693.6" fill="none" stroke="#222" stroke-width="0.9"/><path d="M359.2 719.6 H364.8 L359.6 725.6" fill="none" stroke="#333" stroke-width="0.9"/><path d="M394 719.4 L399.6 727.6 M399.6 719.4 L393.4 727.6" fill="none" stroke="#222" stroke-width="0.9"/></g></svg></div>
</body></html>
